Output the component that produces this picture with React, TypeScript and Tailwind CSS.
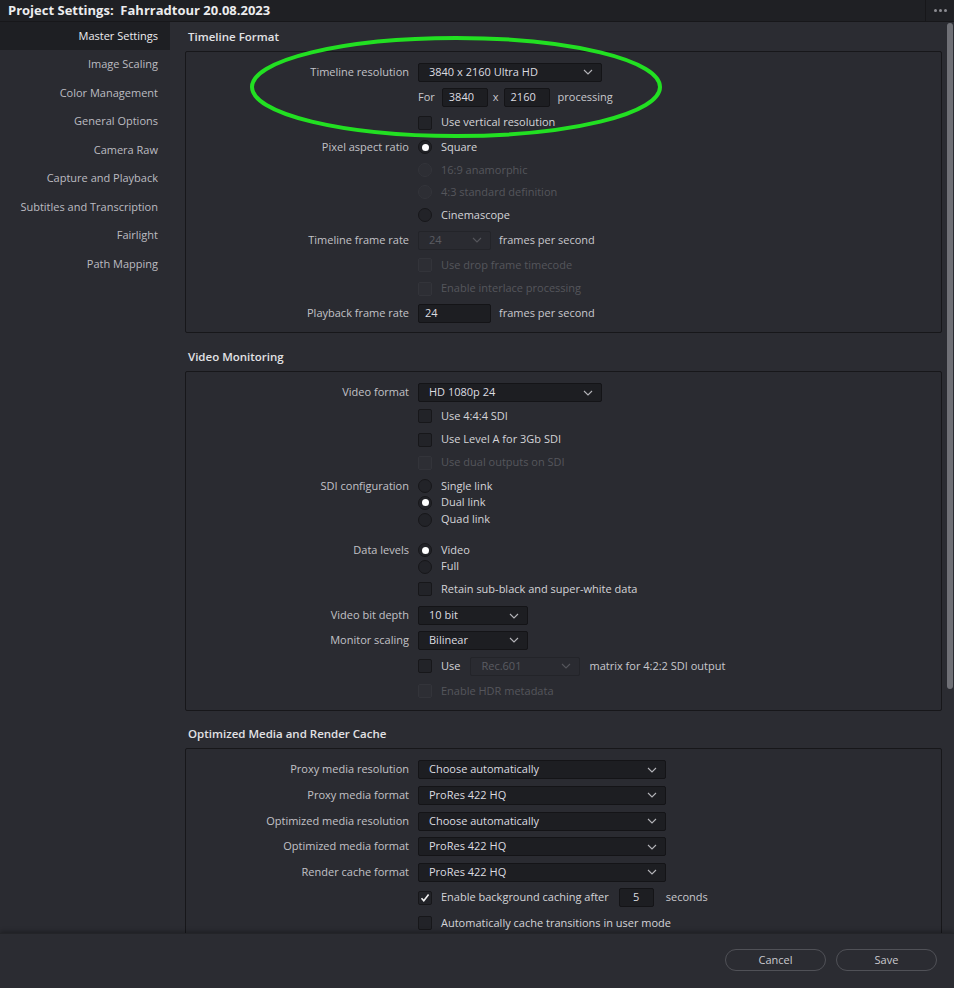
import React from 'react';

const cx = (...c: (string | false | undefined)[]) => c.filter(Boolean).join(' ');

function Chevron({ dim }: { dim?: boolean }) {
  return (
    <svg width="10" height="6" viewBox="0 0 10 6" className="shrink-0">
      <path d="M1 1l4 4 4-4" fill="none" stroke={dim ? '#55565c' : '#b4b4b9'} strokeWidth="1.1" />
    </svg>
  );
}

function Select({ value, w, disabled }: { value: string; w: string; disabled?: boolean }) {
  return (
    <div
      className={cx(
        'h-[19px] flex items-center justify-between pl-[10px] pr-[8px] rounded-[2px] border',
        disabled ? 'bg-[#2a2b31] border-[#232429] text-[#5a5b61]' : 'bg-[#1d1e22] border-[#141417] text-[#dcdce0]',
        w,
      )}
    >
      <span>{value}</span>
      <Chevron dim={disabled} />
    </div>
  );
}

function Field({ value, w, center }: { value: string; w: string; center?: boolean }) {
  return (
    <div
      className={cx(
        'h-[19px] flex items-center px-[6px] rounded-[2px] border bg-[#1d1e22] border-[#141417] text-[#dcdce0]',
        center && 'justify-center',
        w,
      )}
    >
      {value}
    </div>
  );
}

function Check({ label, on, disabled }: { label: string; on?: boolean; disabled?: boolean }) {
  return (
    <div className="flex items-center gap-[9px]">
      <div
        className={cx(
          'w-[14px] h-[14px] rounded-[2px] border flex items-center justify-center',
          disabled ? 'bg-[#2d2e34] border-[#33343a]' : 'bg-[#222328] border-[#17171a]',
        )}
      >
        {on && (
          <svg width="10" height="10" viewBox="0 0 10 10">
            <path d="M1.5 5.2l2.3 2.6L8.6 1.6" fill="none" stroke="#f2f2f2" strokeWidth="1.6" />
          </svg>
        )}
      </div>
      <span className={disabled ? 'text-[#55565c]' : 'text-[#d4d4d8]'}>{label}</span>
    </div>
  );
}

function Radio({ label, on, disabled }: { label: string; on?: boolean; disabled?: boolean }) {
  return (
    <div className="flex items-center gap-[9px]">
      <div
        className={cx(
          'w-[14px] h-[14px] rounded-full border flex items-center justify-center',
          disabled ? 'bg-[#2d2e34] border-[#33343a]' : 'bg-[#222328] border-[#17171a]',
        )}
      >
        {on && <div className="w-[7px] h-[7px] rounded-full bg-white" />}
      </div>
      <span className={disabled ? 'text-[#55565c]' : 'text-[#d4d4d8]'}>{label}</span>
    </div>
  );
}

function Row({ label, cls, children }: { label?: string; cls: string; children: React.ReactNode }) {
  return (
    <div className={cx('flex items-center', cls)}>
      <div className="w-[223px] text-right text-[#c2c2c7] shrink-0">{label}</div>
      <div className="ml-[9px] flex items-center">{children}</div>
    </div>
  );
}

function Heading({ children, cls }: { children: React.ReactNode; cls: string }) {
  return (
    <div className={cx('flex items-center pl-[3px] text-[#e2e2e5] font-semibold text-[11.5px]', cls)}>{children}</div>
  );
}

const nav = [
  'Image Scaling',
  'Color Management',
  'General Options',
  'Camera Raw',
  'Capture and Playback',
  'Subtitles and Transcription',
  'Fairlight',
  'Path Mapping',
];

export default function App() {
  return (
    <div className="relative w-[954px] h-[988px] overflow-hidden bg-[#2b2c32] font-['Open_Sans',sans-serif] text-[11px] flex flex-col">
      {/* Title bar */}
      <div className="h-[22px] shrink-0 bg-[#1f2024] flex items-center border-b border-[#17171a]">
        <div className="flex-1 pl-[8px] text-[13px] font-bold text-[#ececee] whitespace-pre">
          Project Settings:  Fahrradtour 20.08.2023
        </div>
        <div className="w-[29px] h-full border-l border-[#17171a] flex items-center justify-center gap-[2px]">
          <span className="w-[3px] h-[3px] rounded-full bg-[#8c8c92]" />
          <span className="w-[3px] h-[3px] rounded-full bg-[#8c8c92]" />
          <span className="w-[3px] h-[3px] rounded-full bg-[#8c8c92]" />
        </div>
      </div>

      <div className="flex h-[911px] shrink-0">
        {/* Sidebar */}
        <div className="w-[170px] shrink-0 bg-[#2a2b31]">
          <div className="h-[28px] bg-[#1e1f23] flex items-center justify-end pr-[12px] text-[#ededf0]">Master Settings</div>
          {nav.map((n) => (
            <div key={n} className="h-[28.5px] flex items-center justify-end pr-[12px] text-[#bcbcc1]">
              {n}
            </div>
          ))}
        </div>

        {/* Main */}
        <div className="flex-1 flex overflow-hidden">
          <div className="w-[772px] pl-[15px] overflow-hidden">
            <Heading cls="h-[29px]">Timeline Format</Heading>
            <div className="w-[757px] h-[282px] border border-[#17171a] rounded-[2px] bg-[#2a2b31] pt-[7px]">
              <Row label="Timeline resolution" cls="h-[26px]">
                <Select value="3840 x 2160 Ultra HD" w="w-[184px]" />
              </Row>
              <Row cls="h-[25px]">
                <span className="text-[#c8c8cd]">For</span>
                <div className="ml-[7px]"><Field value="3840" w="w-[46px]" /></div>
                <span className="ml-[5px] mr-[5px] text-[#c8c8cd]">x</span>
                <Field value="2160" w="w-[46px]" />
                <span className="ml-[8px] text-[#c8c8cd]">processing</span>
              </Row>
              <Row cls="h-[25px]">
                <Check label="Use vertical resolution" />
              </Row>
              <Row label="Pixel aspect ratio" cls="h-[24px]">
                <Radio label="Square" on />
              </Row>
              <Row cls="h-[22px]">
                <Radio label="16:9 anamorphic" disabled />
              </Row>
              <Row cls="h-[22px]">
                <Radio label="4:3 standard definition" disabled />
              </Row>
              <Row cls="h-[24px]">
                <Radio label="Cinemascope" />
              </Row>
              <Row label="Timeline frame rate" cls="h-[26px]">
                <Select value="24" w="w-[73px]" disabled />
                <span className="ml-[8px] text-[#c8c8cd]">frames per second</span>
              </Row>
              <Row cls="h-[24px]">
                <Check label="Use drop frame timecode" disabled />
              </Row>
              <Row cls="h-[23px]">
                <Check label="Enable interlace processing" disabled />
              </Row>
              <Row label="Playback frame rate" cls="h-[26px]">
                <Field value="24" w="w-[73px]" />
                <span className="ml-[8px] text-[#c8c8cd]">frames per second</span>
              </Row>
            </div>

            <Heading cls="h-[38px] pt-[9px]">Video Monitoring</Heading>
            <div className="w-[757px] h-[340px] border border-[#17171a] rounded-[2px] bg-[#2a2b31] pt-[9px]">
              <Row label="Video format" cls="h-[23px]">
                <Select value="HD 1080p 24" w="w-[184px]" />
              </Row>
              <Row cls="h-[24px]">
                <Check label="Use 4:4:4 SDI" />
              </Row>
              <Row cls="h-[23px]">
                <Check label="Use Level A for 3Gb SDI" />
              </Row>
              <Row cls="h-[23px]">
                <Check label="Use dual outputs on SDI" disabled />
              </Row>
              <Row label="SDI configuration" cls="h-[16px] mt-[4px]">
                <Radio label="Single link" />
              </Row>
              <Row cls="h-[17px]">
                <Radio label="Dual link" on />
              </Row>
              <Row cls="h-[17px]">
                <Radio label="Quad link" />
              </Row>
              <Row label="Data levels" cls="h-[16px] mt-[14px]">
                <Radio label="Video" on />
              </Row>
              <Row cls="h-[17px]">
                <Radio label="Full" />
              </Row>
              <Row cls="h-[28px]">
                <Check label="Retain sub-black and super-white data" />
              </Row>
              <Row label="Video bit depth" cls="h-[25px]">
                <Select value="10 bit" w="w-[110px]" />
              </Row>
              <Row label="Monitor scaling" cls="h-[24px]">
                <Select value="Bilinear" w="w-[110px]" />
              </Row>
              <Row cls="h-[28px]">
                <Check label="Use" />
                <div className="ml-[10px]"><Select value="Rec.601" w="w-[110px]" disabled /></div>
                <span className="ml-[9px] text-[#c8c8cd]">matrix for 4:2:2 SDI output</span>
              </Row>
              <Row cls="h-[22px]">
                <Check label="Enable HDR metadata" disabled />
              </Row>
            </div>

            <Heading cls="h-[37px] pt-[8px]">Optimized Media and Render Cache</Heading>
            <div className="w-[757px] h-[240px] border border-[#17171a] rounded-[2px] bg-[#2a2b31] pt-[8px]">
              <Row label="Proxy media resolution" cls="h-[25px]">
                <Select value="Choose automatically" w="w-[248px]" />
              </Row>
              <Row label="Proxy media format" cls="h-[26px]">
                <Select value="ProRes 422 HQ" w="w-[248px]" />
              </Row>
              <Row label="Optimized media resolution" cls="h-[26px]">
                <Select value="Choose automatically" w="w-[248px]" />
              </Row>
              <Row label="Optimized media format" cls="h-[25px]">
                <Select value="ProRes 422 HQ" w="w-[248px]" />
              </Row>
              <Row label="Render cache format" cls="h-[26px]">
                <Select value="ProRes 422 HQ" w="w-[248px]" />
              </Row>
              <Row cls="h-[25px]">
                <Check label="Enable background caching after" on />
                <div className="ml-[10px]"><Field value="5" w="w-[35px]" center /></div>
                <span className="ml-[12px] text-[#c8c8cd]">seconds</span>
              </Row>
              <Row cls="h-[26px]">
                <Check label="Automatically cache transitions in user mode" />
              </Row>
            </div>
          </div>
          {/* Scrollbar */}
          <div className="w-[12px] pl-[5px] pt-[1px]">
            <div className="w-[6px] h-[666px] rounded-full bg-[#6f7076]" />
          </div>
        </div>
      </div>

      {/* Footer */}
      <div className="flex-1 border-t border-[#232428] shadow-[0_-2px_4px_rgba(0,0,0,0.25)] flex justify-end items-start pt-[15px] pr-[17px] gap-[10px]">
        <button className="w-[101px] h-[22px] rounded-full border border-[#505157] text-[#c9c9ce] text-[11px]">Cancel</button>
        <button className="w-[101px] h-[22px] rounded-full border border-[#505157] text-[#c9c9ce] text-[11px]">Save</button>
      </div>

      {/* Annotation ellipse */}
      <svg className="absolute left-0 top-0 pointer-events-none" width="954" height="988">
        <ellipse cx="456" cy="87" rx="204" ry="49" fill="none" stroke="#22e022" strokeWidth="4" />
      </svg>
    </div>
  );
}
